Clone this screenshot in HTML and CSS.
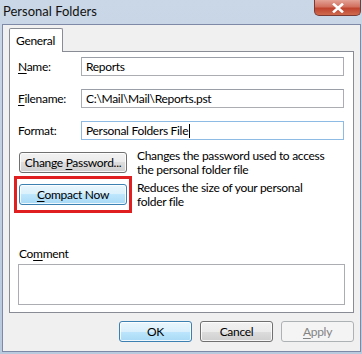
FILE: index.html
```html
<!DOCTYPE html>
<html>
<head>
<meta charset="utf-8">
<link rel="stylesheet" href="styles.css">
</head>
<body>
<div class="window">
  <div class="titlebar">
    <span class="title">Personal Folders</span>
    <div class="close"><svg width="14" height="10" viewBox="0 0 14 10"><path d="M3 1.5 L11 8.5 M11 1.5 L3 8.5" stroke="#ffffff" stroke-width="2.6" stroke-linecap="square" fill="none"/></svg></div>
  </div>
  <div class="client">
    <div class="tabs"><div class="tab">General</div></div>
    <div class="panel">
      <div class="fields">
        <label class="lbl"><u>N</u>ame:</label>
        <div class="input">Reports</div>
        <label class="lbl"><u>F</u>ilename:</label>
        <div class="input">C:\Mail\Mail\Reports.pst</div>
        <label class="lbl">Format:</label>
        <div class="input focus">Personal Folders File<span class="caret"></span></div>
      </div>
      <div class="actions">
        <div class="action">
          <div class="btn"><span>Change <u>P</u>assword...</span></div>
          <div class="desc">Changes the password used to access<br>the personal folder file</div>
        </div>
        <div class="action">
          <div class="btn default"><span><u>C</u>ompact Now</span></div>
          <div class="desc">Reduces the size of your personal<br>folder file</div>
          <div class="highlight"></div>
        </div>
      </div>
      <div class="comment">
        <div class="lbl">Co<u>m</u>ment</div>
        <div class="textarea"></div>
      </div>
    </div>
    <div class="footer">
      <div class="btn wide default"><span>OK</span></div>
      <div class="btn wide"><span>Cancel</span></div>
      <div class="btn wide disabled"><span><u>A</u>pply</span></div>
    </div>
  </div>
</div>
</body>
</html>
```
FILE: styles.css
```css
* { box-sizing: border-box; }
html, body { margin: 0; padding: 0; }
body {
  width: 362px;
  height: 354px;
  overflow: hidden;
  font-family: Lato, "Noto Sans", sans-serif;
  font-size: 12px;
  letter-spacing: -0.3px;
  color: #000;
}
.window {
  width: 362px;
  height: 354px;
  background: linear-gradient(180deg, #cad7e7 0%, #c3d1e3 40%, #b9c9de 100%);
  padding: 0 1px 2px 2px;
  display: flex;
  flex-direction: column;
}
.titlebar {
  height: 24px;
  display: flex;
  justify-content: space-between;
  align-items: flex-start;
  flex: none;
}
.title {
  margin-top: 3px;
  margin-left: 1px;
  font-size: 13px;
  letter-spacing: 0;
  color: #111;
}
.close {
  width: 47px;
  height: 16px;
  border: 1px solid #7a3a33;
  border-top: none;
  border-radius: 0 0 5px 5px;
  background: linear-gradient(180deg, #e3a296 0%, #d2705f 45%, #c0442f 55%, #cf6a4f 100%);
  display: flex;
  align-items: center;
  justify-content: center;
}
.client {
  flex: 1;
  background: #f0f0f0;
  border: 1px solid #7d89a6;
  padding: 3px 6px 0 6px;
  display: flex;
  flex-direction: column;
}
.tabs {
  display: flex;
  height: 24px;
  position: relative;
  z-index: 1;
}
.tab {
  width: 54px;
  height: 24px;
  background: #fff;
  border: 1px solid #898c95;
  border-bottom: none;
  padding: 4px 0 0 6px;
  border-radius: 2px 2px 0 0;
}
.panel {
  height: 262px;
  margin-top: -1px;
  background: #fff;
  border: 1px solid #898c95;
  padding: 5px 6px 0 8px;
  display: flex;
  flex-direction: column;
}
.fields {
  display: grid;
  grid-template-columns: 63px 263px;
  row-gap: 13px;
  align-items: center;
}
.lbl { line-height: 16px; }
.input {
  height: 19px;
  border: 1px solid #abadb3;
  border-top-color: #9a9ea6;
  background: #fff;
  padding: 0 4px;
  line-height: 17px;
  white-space: nowrap;
}
.input.focus { border-color: #8ebbe3; }
.caret {
  display: inline-block;
  width: 1px;
  height: 14px;
  background: #000;
  vertical-align: -3px;
  margin-left: 1px;
}
.actions {
  margin-top: 12px;
  display: flex;
  flex-direction: column;
  gap: 11px;
}
.action {
  display: flex;
  align-items: flex-start;
  gap: 10px;
  height: 21px;
  padding-left: 1px;
  position: relative;
}
.btn {
  height: 21px;
  width: 108px;
  border: 1px solid #707070;
  border-radius: 3px;
  background: linear-gradient(180deg, #f2f2f2 0%, #ebebeb 50%, #dddddd 50%, #cfcfcf 100%);
  box-shadow: inset 0 0 0 1px rgba(255,255,255,0.8);
  display: flex;
  align-items: center;
  justify-content: center;
  flex: none;
  line-height: 1;
  white-space: nowrap;
}
.btn.default {
  border-color: #3c7fb1;
  background: linear-gradient(180deg, #eaf6fd 0%, #d9f0fc 50%, #bee6fd 50%, #a7d9f5 100%);
}
.btn.disabled {
  border-color: #adb2b5;
  background: #f4f4f4;
  color: #838383;
  box-shadow: none;
}
.desc {
  line-height: 14px;
  margin-top: -3px;
  white-space: nowrap;
}
.highlight {
  position: absolute;
  left: -4px;
  top: -8px;
  width: 118px;
  height: 37px;
  border: 3px solid #e02020;
}
.comment {
  margin-top: auto;
  margin-bottom: 7px;
}
.comment .lbl { padding-left: 1px; margin-bottom: 2px; }
.textarea {
  width: 327px;
  height: 41px;
  border: 1px solid #abadb3;
  background: #fff;
}
.footer {
  display: flex;
  justify-content: flex-end;
  gap: 8px;
  padding-top: 8px;
}
.btn.wide { width: 73px; }
u { text-decoration-thickness: 1px; text-underline-offset: 2px; }
```
